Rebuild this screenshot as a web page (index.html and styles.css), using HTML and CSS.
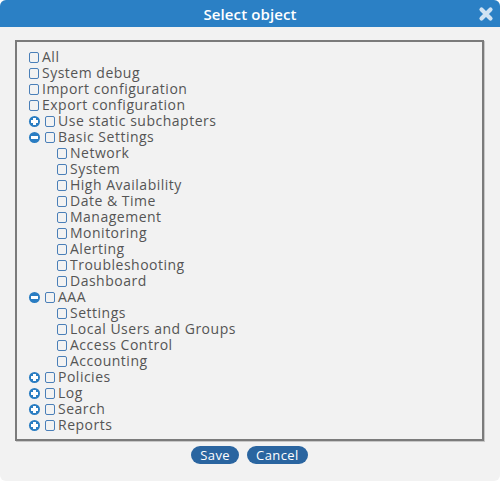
FILE: index.html
```html
<!DOCTYPE html>
<html>
<head>
<meta charset="utf-8">
<link rel="stylesheet" href="styles.css">
</head>
<body>
<div class="dialog">
  <div class="titlebar">
    <span class="title">Select object</span>
    <span class="close" aria-label="close"><svg width="16" height="16" viewBox="0 0 16 16"><path d="M3.5 3.5 L12.5 12.5 M12.5 3.5 L3.5 12.5" stroke="#cfe2f3" stroke-width="4.2" stroke-linecap="round"/></svg></span>
  </div>
  <div class="content">
    <div class="tree">
      <div class="row"><span class="cb"></span><span class="lbl">All</span></div>
      <div class="row"><span class="cb"></span><span class="lbl">System debug</span></div>
      <div class="row"><span class="cb"></span><span class="lbl">Import configuration</span></div>
      <div class="row"><span class="cb"></span><span class="lbl">Export configuration</span></div>
      <div class="row"><span class="tg plus"></span><span class="cb"></span><span class="lbl">Use static subchapters</span></div>
      <div class="row"><span class="tg minus"></span><span class="cb"></span><span class="lbl">Basic Settings</span></div>
      <div class="row child"><span class="cb"></span><span class="lbl">Network</span></div>
      <div class="row child"><span class="cb"></span><span class="lbl">System</span></div>
      <div class="row child"><span class="cb"></span><span class="lbl">High Availability</span></div>
      <div class="row child"><span class="cb"></span><span class="lbl">Date &amp; Time</span></div>
      <div class="row child"><span class="cb"></span><span class="lbl">Management</span></div>
      <div class="row child"><span class="cb"></span><span class="lbl">Monitoring</span></div>
      <div class="row child"><span class="cb"></span><span class="lbl">Alerting</span></div>
      <div class="row child"><span class="cb"></span><span class="lbl">Troubleshooting</span></div>
      <div class="row child"><span class="cb"></span><span class="lbl">Dashboard</span></div>
      <div class="row"><span class="tg minus"></span><span class="cb"></span><span class="lbl">AAA</span></div>
      <div class="row child"><span class="cb"></span><span class="lbl">Settings</span></div>
      <div class="row child"><span class="cb"></span><span class="lbl">Local Users and Groups</span></div>
      <div class="row child"><span class="cb"></span><span class="lbl">Access Control</span></div>
      <div class="row child"><span class="cb"></span><span class="lbl">Accounting</span></div>
      <div class="row"><span class="tg plus"></span><span class="cb"></span><span class="lbl">Policies</span></div>
      <div class="row"><span class="tg plus"></span><span class="cb"></span><span class="lbl">Log</span></div>
      <div class="row"><span class="tg plus"></span><span class="cb"></span><span class="lbl">Search</span></div>
      <div class="row"><span class="tg plus"></span><span class="cb"></span><span class="lbl">Reports</span></div>
    </div>
    <div class="buttons">
      <button class="btn">Save</button>
      <button class="btn">Cancel</button>
    </div>
  </div>
</div>
</body>
</html>
```
FILE: styles.css
```css
html, body {
  margin: 0;
  padding: 0;
  background: #ffffff;
}
body {
  font-family: "Open Sans", "DejaVu Sans", sans-serif;
}
.dialog {
  width: 500px;
  height: 481px;
  background: #f2f2f2;
  border-radius: 6px;
  overflow: hidden;
  display: flex;
  flex-direction: column;
}
.titlebar {
  height: 27px;
  background: #2b80c5;
  display: flex;
  align-items: center;
  justify-content: center;
  position: relative;
}
.title {
  color: #ffffff;
  font-size: 15px;
  font-weight: 600;
  letter-spacing: 0.1px;
}
.close {
  position: absolute;
  right: 6px;
  top: 5px;
  width: 16px;
  height: 16px;
}
.content {
  padding: 13px 16px 0 15px;
}
.tree {
  height: 385px;
  border: 2px solid #7b7b7b;
  box-shadow: 1px 1px 0 #c8c8c8;
  padding: 7px 12px 5px;
}
.row {
  height: 16px;
  line-height: 16px;
  display: flex;
  align-items: center;
  font-size: 14px;
  letter-spacing: 0.5px;
  color: #555555;
}
.row.child {
  padding-left: 28px;
}
.cb {
  width: 8px;
  height: 9px;
  border: 1px solid #4a7fb8;
  border-radius: 2px;
  margin-right: 3px;
  flex: none;
}
.tg {
  width: 11px;
  height: 11px;
  border-radius: 50%;
  background: #2a7dc2;
  margin-right: 5px;
  position: relative;
  flex: none;
}
.tg::before, .tg.plus::after {
  content: "";
  position: absolute;
  background: #fff;
}
.tg::before {
  left: 2px;
  top: 4px;
  width: 7px;
  height: 3px;
}
.tg.plus::after {
  left: 4px;
  top: 2px;
  width: 3px;
  height: 7px;
}
.lbl {
  white-space: nowrap;
}
.buttons {
  display: flex;
  justify-content: center;
  gap: 8px;
  margin-top: 5px;
}
.btn {
  height: 18px;
  border: none;
  border-radius: 9px;
  background: #2a65a0;
  color: #ffffff;
  font-family: "Open Sans", "DejaVu Sans", sans-serif;
  font-size: 13px;
  letter-spacing: 0.4px;
  padding: 0 9px;
  line-height: 18px;
}
```
